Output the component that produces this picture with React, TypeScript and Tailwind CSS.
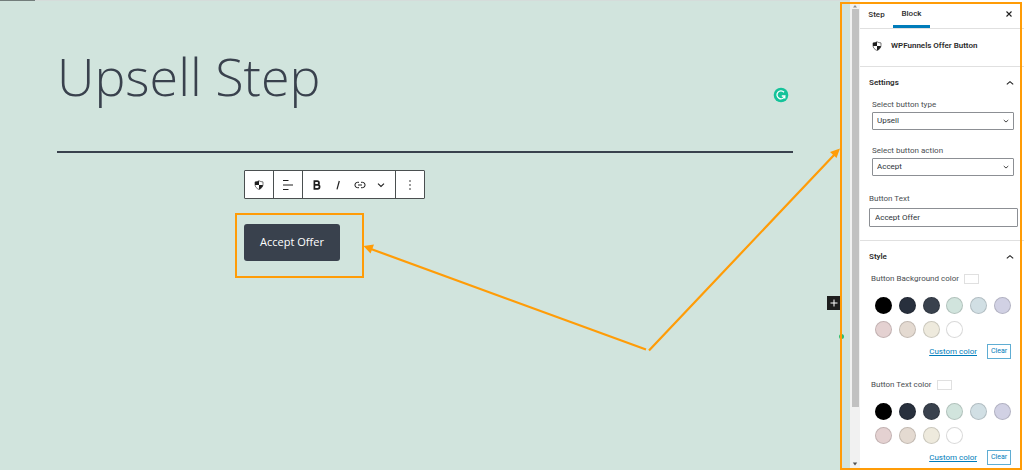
import React from 'react';

const SWATCHES = [
  { name: 'Black', bg: 'bg-black' },
  { name: 'Dark gray', bg: 'bg-[#28303d]' },
  { name: 'Gray', bg: 'bg-[#39414d]' },
  { name: 'Green', bg: 'bg-[#d1e4dd]' },
  { name: 'Blue', bg: 'bg-[#d1dfe4]' },
  { name: 'Purple', bg: 'bg-[#d1d1e4]' },
  { name: 'Red', bg: 'bg-[#e4d1d1]' },
  { name: 'Orange', bg: 'bg-[#e4dad1]' },
  { name: 'Yellow', bg: 'bg-[#eeeadd]' },
  { name: 'White', bg: 'bg-white' },
];

const ShieldIcon = () => (
  <svg viewBox="0 0 20 20" className="w-[10px] h-[10px]" aria-hidden="true">
    <path d="M10 1.5c2.5 1.6 5 2.2 8 2.3v5c0 4.8-3 8-8 10.2C5 16.8 2 13.6 2 8.8v-5c3-.1 5.5-.7 8-2.3z" fill="#fff" stroke="#1e1e1e" strokeWidth="1.2" />
    <path d="M10 1.5C7.5 3.1 5 3.7 2 3.8V10h8z" fill="#1e1e1e" />
    <path d="M10 10h7.9c-.6 4-3.3 6.9-7.9 9z" fill="#1e1e1e" />
  </svg>
);

const Chevron = ({ up = false }: { up?: boolean }) => (
  <svg viewBox="0 0 8 8" className="w-2 h-2" fill="none" stroke="#1e1e1e" strokeWidth="1.1" aria-hidden="true">
    <path d={up ? 'M.8 5.3L4 2.6l3.2 2.7' : 'M1 2.7l3 2.7 3-2.7'} />
  </svg>
);

const SelectField = ({ id, label, value }: { id: string; label: string; value: string }) => (
  <div className="mx-[3px]">
    <label htmlFor={id} className="block text-[8px] leading-[14px]">{label}</label>
    <div className="relative">
      <select
        id={id}
        defaultValue={value}
        className="block w-full h-[18px] px-1 appearance-none bg-white border border-[#8c8f94] rounded-[1px] text-[8px] leading-[16px] text-[#2c3338]"
      >
        <option>{value}</option>
      </select>
      <span className="absolute right-1 top-[5px] pointer-events-none scale-75">
        <Chevron />
      </span>
    </div>
  </div>
);

const PanelTitle = ({ children }: { children: React.ReactNode }) => (
  <button type="button" className="flex w-full items-center justify-between h-[31px] text-[8px] font-semibold text-[#2c2c2c]">
    {children}
    <Chevron up />
  </button>
);

const ColorControl = ({ label }: { label: string }) => (
  <div className="ml-[2px] mr-[3px]">
    <div className="flex items-center gap-[5px] h-[14px] text-[8px]">
      {label}
      <span className="w-[15px] h-[10px] border border-[#e0e0e0] bg-white" />
    </div>
    <div className="grid grid-cols-[repeat(6,17px)] justify-between gap-y-[7px] mt-[11px] ml-1">
      {SWATCHES.map((s) => (
        <button key={s.name} type="button" aria-label={s.name} className={`w-[17px] h-[17px] rounded-full border border-black/15 ${s.bg}`} />
      ))}
    </div>
    <div className="flex items-center justify-end gap-[10px] mt-[6px]">
      <a href="#custom" className="text-[8px] leading-[15px] text-[#007cba] underline">Custom color</a>
      <button type="button" className="h-[15px] w-6 border border-[#5fadd3] text-[7px] leading-[13px] text-[#007cba]">Clear</button>
    </div>
  </div>
);

const Toolbar = () => (
  <div className="flex w-[181px] h-[29px] bg-white border border-[#4a4f50] rounded-[1px] text-[#1e1e1e]">
    <button type="button" aria-label="Block type" className="flex items-center justify-center w-[29px] border-r border-[#4a4f50]">
      <ShieldIcon />
    </button>
    <button type="button" aria-label="Align" className="flex items-center justify-center w-[29px] border-r border-[#4a4f50]">
      <svg viewBox="0 0 12 12" className="w-3 h-3" stroke="currentColor" strokeWidth="1">
        <path d="M1 1.5h5.500M1 6h10M1 10.500h5.500" />
      </svg>
    </button>
    <div className="flex flex-1 items-center justify-around px-[3px] border-r border-[#4a4f50]">
      <button type="button" aria-label="Bold">
        <svg viewBox="0 0 12 12" className="w-3 h-3" fill="none" stroke="currentColor" strokeWidth="1.7">
          <path d="M3.400 2.200h2.800a1.800 1.800 0 0 1 0 3.600H3.400zM3.400 5.800h3.200a2 2 0 0 1 0 4H3.400z" />
        </svg>
      </button>
      <button type="button" aria-label="Italic">
        <svg viewBox="0 0 12 12" className="w-3 h-3" stroke="currentColor" strokeWidth="1.2">
          <path d="M7.300 2L5 10.300" />
        </svg>
      </button>
      <button type="button" aria-label="Link">
        <svg viewBox="0 0 12 12" className="w-3 h-3" fill="none" stroke="currentColor" strokeWidth="1">
          <path d="M5 3.300H3.600a2.700 2.700 0 0 0 0 5.400H5M7 3.300h1.400a2.700 2.700 0 0 1 0 5.400H7M4 6h4" />
        </svg>
      </button>
      <button type="button" aria-label="More formatting" className="px-0.5">
        <Chevron />
      </button>
    </div>
    <button type="button" aria-label="Options" className="flex items-center justify-center w-7">
      <svg viewBox="0 0 12 12" className="w-3 h-3" fill="currentColor">
        <circle cx="6" cy="2" r=".8" />
        <circle cx="6" cy="6" r=".8" />
        <circle cx="6" cy="10" r=".8" />
      </svg>
    </button>
  </div>
);

const Editor = () => (
  <main className="relative flex-1 min-w-0 bg-[#d1e4dd] px-[57px] font-['Open_Sans','Noto_Sans',sans-serif]">
    <div className="absolute inset-x-0 top-0 h-px bg-[#d5dcda]">
      <div className="w-[35px] h-px bg-[#737d7b]" />
    </div>
    <header className="relative h-[153px] pt-9 border-b-2 border-[#39414d]">
      <h1 className="text-[52px] leading-[80px] font-light text-[#39414d]">Upsell Step</h1>
      <svg viewBox="0 0 16 16" className="absolute right-1 top-[87px] w-4 h-4" aria-hidden="true">
        <circle cx="8" cy="8" r="7.3" fill="#15c39a" />
        <path d="M11 5.200A4 4 0 1 0 11.800 9H8.800M11.800 8.500v3" fill="none" stroke="#fff" strokeWidth="1.3" />
      </svg>
    </header>
    <div className="max-w-[362px] mx-auto pt-[17px]">
      <Toolbar />
      <div className="relative inline-block mt-[25px]">
        <button type="button" className="block h-[37px] w-24 rounded-[3px] bg-[#39414d] text-white text-[11px]">Accept Offer</button>
        <div className="absolute -left-[9px] -right-6 -top-[11px] -bottom-[17px] border-2 border-[#ff9c07]" />
      </div>
    </div>
    <button type="button" aria-label="Add block" className="absolute right-[9px] top-[296px] flex items-center justify-center w-[14px] h-[14px] bg-[#1e1e1e]">
      <svg viewBox="0 0 8 8" className="w-2 h-2" stroke="#fff" strokeWidth="1">
        <path d="M4 .5v7M.5 4h7" />
      </svg>
    </button>
    <span className="absolute right-[6px] top-[334px] w-[5px] h-[5px] rounded-full bg-[#2ebd6b]" />
  </main>
);

const Scrollbar = () => (
  <div className="flex flex-col items-center w-[10px] bg-[#f1f1f1] py-[3px]">
    <svg viewBox="0 0 6 6" className="w-[6px] h-[6px]" fill="#8a8a8a"><path d="M1 4.500h4L3 2z" /></svg>
    <div className="w-[7px] h-[398px] bg-[#c1c1c1]" />
    <svg viewBox="0 0 6 6" className="w-[6px] h-[6px] mt-auto" fill="#505050"><path d="M.8 1.500h4.400L3 4.500z" /></svg>
  </div>
);

const Sidebar = () => (
  <aside className="w-[164px] bg-white text-[8px] text-[#4a4e52] overflow-hidden font-['Roboto','Open_Sans',sans-serif]">
    <div className="flex h-[29px] border-b border-[#e0e0e0] text-[#2c2c2c] font-medium">
      <button type="button" className="w-[33px] pt-px">Step</button>
      <button type="button" className="w-[37px] pt-[3px] border-b-3 border-[#007cba]">Block</button>
      <button type="button" aria-label="Close settings" className="ml-auto mr-[11px]">
        <svg viewBox="0 0 8 8" className="w-2 h-2" stroke="#1e1e1e" strokeWidth="1.1"><path d="M1.500 1.500l5 5M6.500 1.500l-5 5" /></svg>
      </button>
    </div>
    <div className="flex items-center gap-[9px] h-[38px] pl-3 pb-1 border-b border-[#e0e0e0] font-semibold text-[#2c2c2c]">
      <ShieldIcon />
      <h2>WPFunnels Offer Button</h2>
    </div>
    <section className="h-[174px] pl-[9px] pr-[6px] border-b border-[#e0e0e0]">
      <div className="pr-1"><PanelTitle>Settings</PanelTitle></div>
      <div className="flex flex-col gap-[14px] mr-px">
        <SelectField id="type" label="Select button type" value="Upsell" />
        <SelectField id="action" label="Select button action" value="Accept" />
      </div>
      <label htmlFor="text" className="block mt-[14px] leading-[18px]">Button Text</label>
      <input id="text" type="text" defaultValue="Accept Offer" className="block w-full h-[19px] px-[5px] border border-[#8c8f94] rounded-[1px] text-[8px] text-[#2c3338]" />
    </section>
    <section className="pl-[9px] pr-[10px]">
      <PanelTitle>Style</PanelTitle>
      <div className="flex flex-col gap-[19px]">
        <ColorControl label="Button Background color" />
        <ColorControl label="Button Text color" />
      </div>
    </section>
  </aside>
);

export default function App() {
  return (
    <div className="relative flex h-screen overflow-hidden">
      <Editor />
      <Scrollbar />
      <Sidebar />

      {/* Callout frame and arrows */}
      <div className="absolute right-[2px] top-0.5 bottom-0 w-[182px] border-2 border-[#ff9c07] pointer-events-none" />
      <svg viewBox="0 0 1024 470" className="absolute inset-0 w-full h-full pointer-events-none" stroke="#ff9c07" strokeWidth="2.2" fill="#ff9c07">
        <path d="M646 349.500L371 249M649 350.500L835 154" />
        <path stroke="none" d="M363.500 246l10.500-1.500-3.500 9zM840 148.500l-3.500 9.500-6.500-6z" />
      </svg>
    </div>
  );
}
